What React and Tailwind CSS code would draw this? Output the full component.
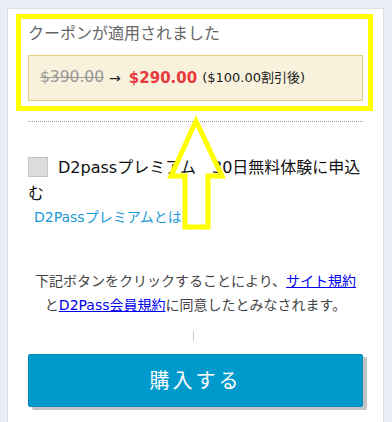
import React from 'react';

const FONT = { fontFamily: '"DejaVu Sans", "Noto Sans CJK JP", sans-serif' };

// Yellow annotation arrow drawn over the form
const UpArrow = () => (
  <svg className="absolute left-[160px] top-[110px]" width="80" height="130" viewBox="0 0 80 130">
    <polygon
      points="36,11 62,66 48,66 48,117 25,117 25,66 11,66"
      fill="none"
      stroke="#ffff00"
      strokeWidth="5"
      strokeLinejoin="miter"
    />
  </svg>
);

export default function App() {
  return (
    <div className="relative min-h-[422px] bg-[#e9edf4] pt-[8px] overflow-hidden" style={FONT}>
      <div className="ml-[7px] w-[377px] min-h-[430px] border border-[#d9dee7] bg-white px-5 pt-[13px]">
        {/* Coupon */}
        <p className="text-[16px] leading-6 text-[#666]">クーポンが適用されました</p>
        <div className="mt-[9px] flex h-[46px] items-center border border-[#e3cd80] bg-[#f8f1dc] pl-[11px]">
          <span className="text-[15.5px] text-[#999] line-through">$390.00</span>
          <span className="ml-[5px] text-[14px] text-[#222]">→</span>
          <span className="ml-[8px] text-[15px] font-bold text-[#e8383d]">$290.00</span>
          <span className="ml-[5px] text-[13px] text-[#222]">($100.00割引後)</span>
        </div>

        <div className="mt-[20px] border-t border-dotted border-[#999]" />

        {/* Premium opt-in */}
        <div className="mt-[31px] text-[16px] leading-[26px] text-[#111]">
          <span className="mr-[10px] inline-block h-[20px] w-[20px] translate-y-[4px] border border-[#c4c4c4] bg-[#dcdcdc] align-baseline" />
          D2passプレミアム　30日無料体験に申込む
        </div>
        <a className="-mt-[2px] ml-[6px] block text-[14px] leading-6 text-[#1a9ad6]" href="#">
          D2Passプレミアムとは
        </a>

        {/* Terms */}
        <p className="mt-[40px] text-center text-[14px] leading-[24px] text-[#444]">
          下記ボタンをクリックすることにより、<a className="text-[#0000ee] underline" href="#">サイト規約</a>
          <br />
          と<a className="text-[#0000ee] underline" href="#">D2Pass会員規約</a>に同意したとみなされます。
        </p>
        <div className="mx-auto mt-[14px] h-[10px] w-px translate-x-[-2px] bg-[#ccc]" />

        <button className="mt-[13px] h-[53px] w-full rounded-[2px] border border-[#0489b8] bg-[#0099cc] text-[20px] tracking-[3px] text-white shadow-[4px_3px_0_#c4c4c4]">
          購入する
        </button>
      </div>

      {/* annotation overlay */}
      <div className="pointer-events-none absolute left-[16px] top-[14px] h-[97px] w-[357px] border-[5px] border-[#ffff00]" />
      <UpArrow />
    </div>
  );
}
